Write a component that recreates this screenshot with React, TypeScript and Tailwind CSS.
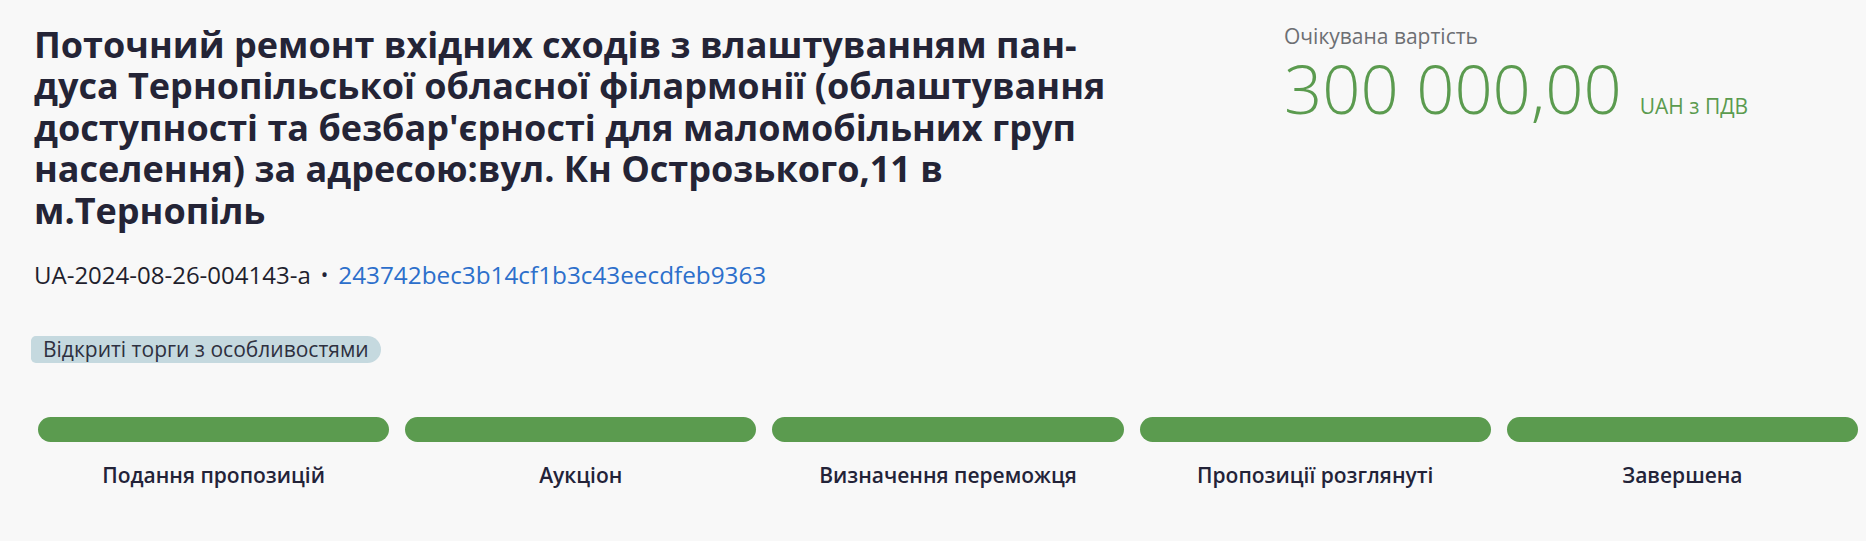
import React from "react";

const steps = [
  "Подання пропозицій",
  "Аукціон",
  "Визначення переможця",
  "Пропозиції розглянуті",
  "Завершена",
];

export default function App() {
  return (
    <div
      className="w-[1866px] h-[541px] bg-[#f8f8f8] text-[#232338] overflow-hidden"
      style={{ fontFamily: '"Open Sans", "Noto Sans", sans-serif' }}
    >
      <div className="flex pl-[34px] pt-[24px]">
        <div className="w-[1085px] shrink-0">
          <h1 className="text-[36px] leading-[1.15] font-bold text-[#242436]">
            Поточний ремонт вхідних сходів з влаштуванням пан{"\u00AD"}дуса
            Тернопільської обласної філармонії (облаштування доступності та
            безбар'єрності для маломобільних груп населення) за адресою:вул. Кн
            Острозького,11 в м.Тернопіль
          </h1>
          <div className="mt-[27px] flex items-center text-[24px] leading-[33px]">
            <span className="text-[#1f1f2e]">UA-2024-08-26-004143-a</span>
            <span className="mx-[10px] text-[20px]">•</span>
            <span className="text-[24.3px] text-[#2c6fcb]">243742bec3b14cf1b3c43eecdfeb9363</span>
          </div>
          <div className="mt-[45px] -ml-[3px] flex">
            <span className="inline-flex h-[27px] items-center rounded-l-[5px] rounded-r-[14px] bg-[#c5d9df] pl-[12px] pr-[12px] text-[21px] text-[#2e3040]">
              Відкриті торги з особливостями
            </span>
          </div>
        </div>
        <div className="ml-[165px] flex flex-col">
          <div className="text-[21px] leading-[24px] text-[#6d6f73]">
            Очікувана вартість
          </div>
          <div className="flex items-baseline text-[#5b9b4f]">
            <span className="text-[67px] leading-[80px] font-light">300 000,00</span>
            <span className="ml-[18px] text-[21px]">UAH з ПДВ</span>
          </div>
        </div>
      </div>
      <div className="mt-[54px] ml-[30px] grid grid-cols-5">
        {steps.map((s) => (
          <div key={s} className="px-[8px] flex flex-col items-center">
            <div className="h-[25px] w-full rounded-full bg-[#5b9b4f]" />
            <div className="mt-[19px] text-[21px] leading-[28px] font-semibold text-[#232338]">
              {s}
            </div>
          </div>
        ))}
      </div>
    </div>
  );
}
